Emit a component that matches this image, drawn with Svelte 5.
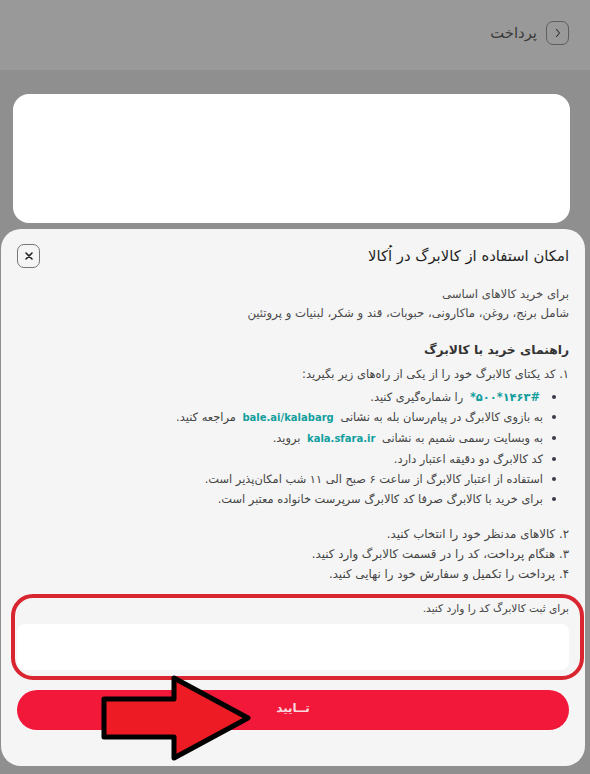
<script>
  const bullets = [
    { a: 'به بازوی کالابرگ در پیام‌رسان بله به نشانی ', link: 'bale.ai/kalabarg', b: ' مراجعه کنید.' },
    { a: 'به وبسایت رسمی شمیم به نشانی ', link: 'kala.sfara.ir', b: ' بروید.' },
    { a: 'کد کالابرگ دو دقیقه اعتبار دارد.' },
    { a: 'استفاده از اعتبار کالابرگ از ساعت ۶ صبح الی ۱۱ شب امکان‌پذیر است.' },
    { a: 'برای خرید با کالابرگ صرفا کد کالابرگ سرپرست خانواده معتبر است.' }
  ];
  const steps = ['۲. کالاهای مدنظر خود را انتخاب کنید.', '۳. هنگام پرداخت، کد را در قسمت کالابرگ وارد کنید.', '۴. پرداخت را تکمیل و سفارش خود را نهایی کنید.'];
</script>

<div class="page" dir="rtl">
  <header class="top">
    <button class="iconbtn" aria-label="بازگشت">
      <svg width="12" height="12" viewBox="0 0 12 12" fill="none" stroke="#333" stroke-width="1.1" stroke-linecap="round" stroke-linejoin="round"><path d="M4.5 2.5 7.5 6l-3 3.5" /></svg>
    </button>
    <span class="title">پرداخت</span>
  </header>
  <div class="card"></div>

  <section class="sheet">
    <div class="sheethead">
      <h2>امکان استفاده از کالابرگ در اُکالا</h2>
      <button class="iconbtn close" aria-label="بستن">
        <svg width="10" height="10" viewBox="0 0 10 10" fill="none" stroke="#222" stroke-width="1.6" stroke-linecap="round"><path d="M2 2l6 6M8 2l-6 6" /></svg>
      </button>
    </div>
    <p class="intro">برای خرید کالاهای اساسی<br />شامل برنج، روغن، ماکارونی، حبوبات، قند و شکر، لبنیات و پروتئین</p>
    <h3>راهنمای خرید با کالابرگ</h3>
    <p class="line first">۱. کد یکتای کالابرگ خود را از یکی از راه‌های زیر بگیرید:</p>
    <ul>
      <li><b class="link code" dir="ltr">*۵۰۰*۱۴۶۳#</b> را شماره‌گیری کنید.</li>
      {#each bullets as item}
        <li>{item.a}{#if item.link}<b class="link">{item.link}</b>{/if}{item.b ?? ''}</li>
      {/each}
    </ul>
    <div class="steps">
      {#each steps as step}
        <p class="step">{step}</p>
      {/each}
    </div>
    <div class="field">
      <span class="label">برای ثبت کالابرگ کد را وارد کنید.</span>
      <div class="input"></div>
    </div>
    <button class="confirm">تــایید</button>
    <div class="highlight"></div>
  </section>

  <svg class="arrow" width="150" height="86" viewBox="0 0 150 86">
    <path d="M3 24H73V3L147 43 73 83V62H3Z" fill="#ed1c24" stroke="#000" stroke-width="5" stroke-linejoin="round" />
  </svg>
</div>

<style>
  :global(body) { margin: 0; background: #8f8f8f; }
  .page {
    position: relative;
    width: 590px;
    height: 774px;
    overflow: hidden;
    background: #8f8f8f;
    font-family: "DejaVu Sans", "Noto Sans", sans-serif;
    color: #3f3f3f;
  }
  .top {
    height: 70px;
    box-sizing: border-box;
    padding: 21px 21px 0 0;
    display: flex;
    align-items: flex-start;
    gap: 9px;
    background: #999;
  }
  .iconbtn {
    width: 23px;
    height: 24px;
    padding: 0;
    display: flex;
    align-items: center;
    justify-content: center;
    box-sizing: border-box;
    background: transparent;
    border: 1px solid #5e5e5e;
    border-radius: 7px;
  }
  .title { font-size: 14.8px; line-height: 24px; color: #3a3a3a; }
  .card {
    height: 129px;
    margin: 24px 20px 0 13px;
    background: #fff;
    border-radius: 16px;
  }
  .sheet {
    position: absolute;
    left: 1px;
    top: 229px;
    width: 584px;
    height: 537px;
    box-sizing: border-box;
    padding: 14px 16px 0;
    background: #f5f5f5;
    border-radius: 20px;
  }
  .sheethead { display: flex; justify-content: space-between; align-items: center; height: 26px; }
  .close { background: #f5f5f5; border-color: #777; }
  h2 { margin: 0; font-size: 14.8px; line-height: 24px; font-weight: 500; color: #1f1f1f; }
  .intro { margin: 16px 0 0; font-size: 11.7px; line-height: 19px; color: #4a4a4a; }
  h3 { margin: 15px 0 0; font-size: 12.3px; line-height: 24px; font-weight: 700; color: #333; }
  .line { margin: 0; font-size: 11.5px; line-height: 20px; color: #444; }
  .first { margin-top: 2px; }
  ul { margin: 0; padding: 3px 26px 0 0; list-style: none; }
  li { position: relative; font-size: 11.4px; line-height: 20px; color: #444; }
  li::before {
    content: "";
    position: absolute;
    right: -13px;
    top: 8px;
    width: 4px;
    height: 4px;
    border-radius: 50%;
    background: #3a3a4a;
  }
  .link { margin: 0 3px; color: #139e9e; font-size: 10px; font-weight: 700; }
  .code { font-size: 11.4px; }
  .steps { margin-top: 15px; }
  .step { margin: 0; font-size: 11.8px; line-height: 20px; color: #444; }
  .field { margin-top: 15px; }
  .label { display: block; font-size: 10.6px; line-height: 18px; color: #444; }
  .input { height: 46px; margin-top: 7px; background: #fff; border-radius: 8px; }
  .confirm {
    display: block;
    width: 100%;
    height: 40px;
    margin-top: 20px;
    padding: 0 0 5px;
    border: 0;
    border-radius: 20px;
    background: #f21839;
    color: #f8d9df;
    font: 700 12px "DejaVu Sans", sans-serif;
  }
  .highlight {
    position: absolute;
    left: 10px;
    top: 365px;
    width: 573px;
    height: 86px;
    box-sizing: border-box;
    border: 4px solid #d9252f;
    border-radius: 22px;
    pointer-events: none;
  }
  .arrow { position: absolute; left: 101px; top: 675px; }
</style>
